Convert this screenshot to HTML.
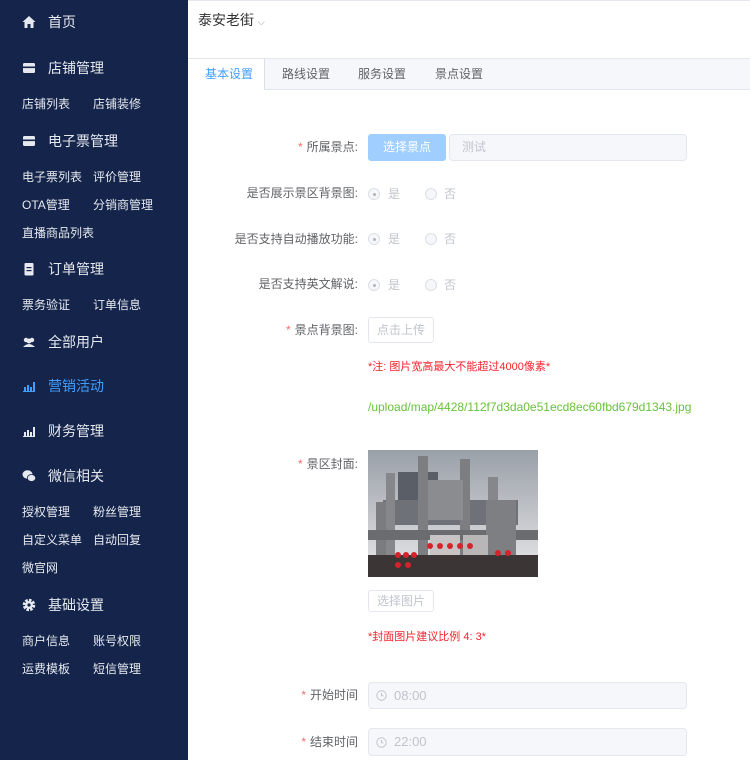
<!DOCTYPE html>
<html><head><meta charset="utf-8"><style>
*{margin:0;padding:0;box-sizing:border-box}
body{width:750px;height:760px;overflow:hidden;background:#fff;font-family:"Liberation Sans","Noto Sans CJK SC",sans-serif;position:relative}
.sb{position:absolute;left:0;top:0;width:188px;height:760px;background:#14244a}
.t{position:absolute;white-space:nowrap;line-height:1}
.m{color:#e6e9ef;font-size:14px;left:48px}
.s{color:#e6e9ef;font-size:12px}
.ic{position:absolute;left:22px;width:14px;height:14px}
.lab{position:absolute;right:392px;font-size:12px;color:#606266;line-height:1;white-space:nowrap}
.lab b{color:#f56c6c;font-weight:normal;margin-right:4px}
.rad{position:absolute;width:12px;height:12px;border:1px solid #dcdfe6;border-radius:50%;background:#f5f7fa}
.rad.on::after{content:"";position:absolute;left:3.5px;top:3.5px;width:3px;height:3px;border-radius:50%;background:#b0b3b8}
.rt{position:absolute;font-size:12px;color:#c0c4cc;line-height:1}
.btn{position:absolute;border:1px solid #e4e7ed;border-radius:3px;font-size:12px;color:#c0c4cc;text-align:center;background:#fff}
.inp{position:absolute;background:#f5f7fa;border:1px solid #e4e7ed;border-radius:4px;font-size:13px;color:#c0c4cc}
</style></head><body>
<div class="sb">
<svg class="ic" style="top:15px" viewBox="0 0 14 14"><path d="M7 1L0.5 7H2.5V13H5.5V9H8.5V13H11.5V7H13.5Z" fill="#e6e9ef"/></svg>
<div class="t m" style="top:15px">首页</div>
<svg class="ic" style="top:61px" viewBox="0 0 14 14"><rect x="1" y="2" width="12" height="10" rx="1.5" fill="#e6e9ef"/><rect x="1" y="5.5" width="12" height="1.6" fill="#14244a"/></svg>
<div class="t m" style="top:61px">店铺管理</div>
<div class="t s" style="left:22px;top:98px">店铺列表</div><div class="t s" style="left:93px;top:98px">店铺装修</div>
<svg class="ic" style="top:134px" viewBox="0 0 14 14"><rect x="1" y="2" width="12" height="10" rx="1.5" fill="#e6e9ef"/><rect x="1" y="5.5" width="12" height="1.6" fill="#14244a"/></svg>
<div class="t m" style="top:134px">电子票管理</div>
<div class="t s" style="left:22px;top:171px">电子票列表</div><div class="t s" style="left:93px;top:171px">评价管理</div>
<div class="t s" style="left:22px;top:199px">OTA管理</div><div class="t s" style="left:93px;top:199px">分销商管理</div>
<div class="t s" style="left:22px;top:227px">直播商品列表</div>
<svg class="ic" style="top:262px" viewBox="0 0 14 14"><rect x="2.5" y="1" width="9" height="12.5" rx="1" fill="#e6e9ef"/><rect x="4.5" y="5" width="5" height="1.2" fill="#14244a"/><rect x="4.5" y="8" width="5" height="1.2" fill="#14244a"/></svg>
<div class="t m" style="top:262px">订单管理</div>
<div class="t s" style="left:22px;top:299px">票务验证</div><div class="t s" style="left:93px;top:299px">订单信息</div>
<svg class="ic" style="top:335px" viewBox="0 0 14 14"><circle cx="4" cy="5" r="2.2" fill="#e6e9ef"/><circle cx="10" cy="5" r="2.2" fill="#e6e9ef"/><circle cx="7" cy="6" r="2.5" fill="#e6e9ef"/><path d="M1 12Q7 6 13 12Z" fill="#e6e9ef"/></svg>
<div class="t m" style="top:335px">全部用户</div>
<svg class="ic" style="top:379px" viewBox="0 0 14 14"><path d="M1 13H13V12H1Z M2 8H4V12H2Z M5 6H7V12H5Z M8 8H10V12H8Z M11 3H13V12H11Z" fill="#409eff"/></svg>
<div class="t m" style="top:379px;color:#409eff">营销活动</div>
<svg class="ic" style="top:424px" viewBox="0 0 14 14"><path d="M1 13H13V12H1Z M2 8H4V12H2Z M5 6H7V12H5Z M8 8H10V12H8Z M11 3H13V12H11Z" fill="#e6e9ef"/></svg>
<div class="t m" style="top:424px">财务管理</div>
<svg class="ic" style="top:469px" viewBox="0 0 14 14"><ellipse cx="5.5" cy="5.5" rx="5" ry="4.2" fill="#e6e9ef"/><ellipse cx="9.5" cy="9" rx="4.2" ry="3.5" fill="#e6e9ef" stroke="#14244a" stroke-width="0.8"/></svg>
<div class="t m" style="top:469px">微信相关</div>
<div class="t s" style="left:22px;top:506px">授权管理</div><div class="t s" style="left:93px;top:506px">粉丝管理</div>
<div class="t s" style="left:22px;top:534px">自定义菜单</div><div class="t s" style="left:93px;top:534px">自动回复</div>
<div class="t s" style="left:22px;top:562px">微官网</div>
<svg class="ic" style="top:598px" viewBox="0 0 14 14"><circle cx="7" cy="7" r="4.5" fill="none" stroke="#e6e9ef" stroke-width="3.5" stroke-dasharray="2.4 1.1"/><circle cx="7" cy="7" r="4" fill="#e6e9ef"/><circle cx="7" cy="7" r="1.6" fill="#14244a"/></svg>
<div class="t m" style="top:598px">基础设置</div>
<div class="t s" style="left:22px;top:635px">商户信息</div><div class="t s" style="left:93px;top:635px">账号权限</div>
<div class="t s" style="left:22px;top:663px">运费模板</div><div class="t s" style="left:93px;top:663px">短信管理</div>
</div>

<div style="position:absolute;left:188px;top:0;width:562px;height:1px;background:#e4e7ed"></div>
<div class="t" style="left:198px;top:13px;font-size:14px;color:#303133">泰安老街 <span style="font-size:9px;color:#909399">⌵</span></div>
<div style="position:absolute;left:188px;top:58px;width:562px;height:32px;background:#f5f7fa;border-top:1px solid #e4e7ed;border-bottom:1px solid #e4e7ed"></div>
<div style="position:absolute;left:188px;top:58px;width:77px;height:32px;background:#fff;border-top:1px solid #e4e7ed;border-right:1px solid #dcdfe6"></div>
<div class="t" style="left:205px;top:68px;font-size:12px;color:#409eff">基本设置</div>
<div class="t" style="left:282px;top:68px;font-size:12px;color:#606266">路线设置</div>
<div class="t" style="left:358px;top:68px;font-size:12px;color:#606266">服务设置</div>
<div class="t" style="left:435px;top:68px;font-size:12px;color:#606266">景点设置</div>

<div class="lab" style="top:141px"><b>*</b>所属景点:</div>
<div class="btn" style="left:368px;top:134px;width:78px;height:27px;line-height:25px;background:#a0cfff;border-color:#a0cfff;color:#fff">选择景点</div>
<div class="inp" style="left:449px;top:134px;width:238px;height:27px;line-height:25px;padding-left:12px;font-size:12px">测试</div>

<div class="lab" style="top:187px;right:392px">是否展示景区背景图:</div>
<div class="rad on" style="left:368px;top:188px"></div><div class="rt" style="left:388px;top:188px">是</div>
<div class="rad" style="left:425px;top:188px"></div><div class="rt" style="left:444px;top:188px">否</div>
<div class="lab" style="top:233px">是否支持自动播放功能:</div>
<div class="rad on" style="left:368px;top:233px"></div><div class="rt" style="left:388px;top:233px">是</div>
<div class="rad" style="left:425px;top:233px"></div><div class="rt" style="left:444px;top:233px">否</div>
<div class="lab" style="top:278px">是否支持英文解说:</div>
<div class="rad on" style="left:368px;top:279px"></div><div class="rt" style="left:388px;top:279px">是</div>
<div class="rad" style="left:425px;top:279px"></div><div class="rt" style="left:444px;top:279px">否</div>

<div class="lab" style="top:324px"><b>*</b>景点背景图:</div>
<div class="btn" style="left:368px;top:317px;width:66px;height:26px;line-height:24px">点击上传</div>
<div class="t" style="left:368px;top:362px;font-size:11px;color:#f5222d">*注: 图片宽高最大不能超过4000像素*</div>
<div class="t" style="left:368px;top:401px;font-size:12px;color:#67c23a">/upload/map/4428/112f7d3da0e51ecd8ec60fbd679d1343.jpg</div>

<div class="lab" style="top:458px"><b>*</b>景区封面:</div>
<svg style="position:absolute;left:368px;top:450px" width="170" height="127" viewBox="0 0 170 127">
<defs><linearGradient id="sk" x1="0" y1="0" x2="0" y2="1"><stop offset="0" stop-color="#9aa0a8"/><stop offset="1" stop-color="#e8e8ea"/></linearGradient></defs>
<rect width="170" height="127" fill="url(#sk)"/>
<rect x="30" y="22" width="40" height="40" fill="#5a5e66"/>
<path d="M15 50H150V75H15Z" fill="#6e7178"/>
<rect x="8" y="52" width="12" height="75" fill="#7a7c80"/>
<rect x="18" y="23" width="9" height="104" fill="#85878b"/>
<rect x="50" y="6" width="10" height="121" fill="#7c7e82"/>
<rect x="92" y="9" width="10" height="118" fill="#7c7e82"/>
<rect x="120" y="27" width="10" height="100" fill="#85878b"/>
<rect x="60" y="30" width="35" height="40" fill="#8a8c90"/>
<rect x="0" y="80" width="170" height="10" fill="#6a6c70"/>
<rect x="118" y="50" width="30" height="77" fill="#7d7f83"/>
<rect x="95" y="85" width="25" height="42" fill="#b9b6b8"/>
<rect x="62" y="85" width="30" height="42" fill="#c8c4c6"/>
<rect x="0" y="105" width="170" height="22" fill="#3b3535"/>
<g fill="#d4232a"><circle cx="30" cy="105" r="3"/><circle cx="38" cy="105" r="3"/><circle cx="46" cy="105" r="3"/><circle cx="62" cy="96" r="3"/><circle cx="72" cy="96" r="3"/><circle cx="82" cy="96" r="3"/><circle cx="92" cy="96" r="3"/><circle cx="102" cy="96" r="3"/><circle cx="130" cy="103" r="3"/><circle cx="140" cy="103" r="3"/><circle cx="30" cy="115" r="3"/><circle cx="40" cy="115" r="3"/></g>
</svg>
<div class="btn" style="left:368px;top:590px;width:66px;height:22px;line-height:20px">选择图片</div>
<div class="t" style="left:368px;top:632px;font-size:11px;color:#f5222d">*封面图片建议比例 4: 3*</div>

<div class="lab" style="top:689px"><b>*</b>开始时间</div>
<div class="inp" style="left:368px;top:682px;width:319px;height:27px;line-height:25px;padding-left:25px">08:00</div>
<svg style="position:absolute;left:376px;top:690px" width="11" height="11" viewBox="0 0 11 11"><circle cx="5.5" cy="5.5" r="4.7" fill="none" stroke="#c0c4cc"/><path d="M5.5 3V5.8H7.5" fill="none" stroke="#c0c4cc"/></svg>
<div class="lab" style="top:736px"><b>*</b>结束时间</div>
<div class="inp" style="left:368px;top:728px;width:319px;height:28px;line-height:26px;padding-left:25px">22:00</div>
<svg style="position:absolute;left:376px;top:737px" width="11" height="11" viewBox="0 0 11 11"><circle cx="5.5" cy="5.5" r="4.7" fill="none" stroke="#c0c4cc"/><path d="M5.5 3V5.8H7.5" fill="none" stroke="#c0c4cc"/></svg>
</body></html>
